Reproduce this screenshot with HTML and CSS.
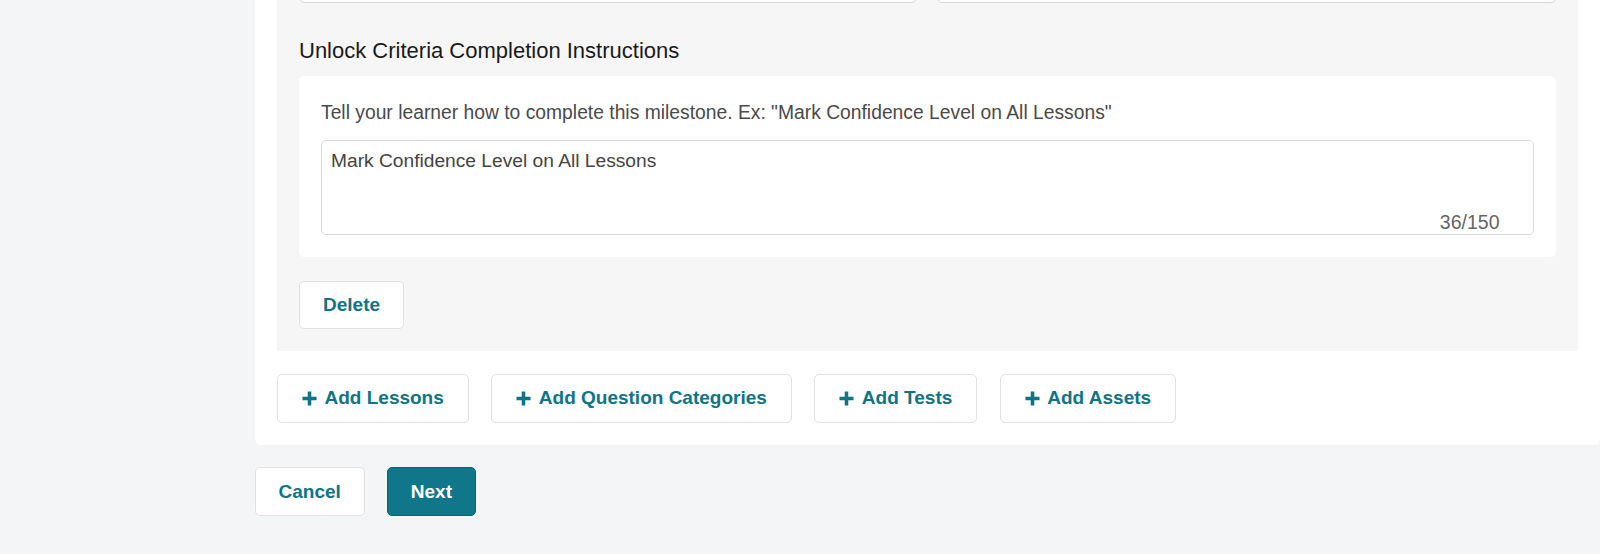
FILE: index.html
```html
<!DOCTYPE html>
<html lang="en">
<head>
  <meta charset="UTF-8">
  <meta name="viewport" content="width=device-width, initial-scale=1.0">
  <title>Edit Milestone</title>
  <link rel="stylesheet" href="styles.css">
</head>
<body>
  <main class="page">
    <section class="card">
      <div class="milestone">
        <div class="field-row">
          <input type="text" class="field" aria-label="Milestone name">
          <input type="text" class="field" aria-label="Milestone reward">
        </div>

        <label class="section-label" for="instructions">Unlock Criteria Completion Instructions</label>

        <div class="instructions">
          <p class="hint">Tell your learner how to complete this milestone. Ex: "Mark Confidence Level on All Lessons"</p>
          <div class="textarea-wrap">
            <textarea id="instructions" maxlength="150">Mark Confidence Level on All Lessons</textarea>
            <span class="counter">36/150</span>
          </div>
        </div>

        <button type="button" class="btn">Delete</button>
      </div>

      <div class="add-row">
        <button type="button" class="btn"><svg class="plus" viewBox="0 0 16 16"><path d="M8 0.5v15M0.5 8h15"/></svg>Add Lessons</button>
        <button type="button" class="btn"><svg class="plus" viewBox="0 0 16 16"><path d="M8 0.5v15M0.5 8h15"/></svg>Add Question Categories</button>
        <button type="button" class="btn"><svg class="plus" viewBox="0 0 16 16"><path d="M8 0.5v15M0.5 8h15"/></svg>Add Tests</button>
        <button type="button" class="btn"><svg class="plus" viewBox="0 0 16 16"><path d="M8 0.5v15M0.5 8h15"/></svg>Add Assets</button>
      </div>
    </section>

    <div class="actions">
      <button type="button" class="btn">Cancel</button>
      <button type="button" class="btn btn-primary">Next</button>
    </div>
  </main>
</body>
</html>
```

FILE: styles.css
```css
body {
  margin: 0;
  background-color: #f4f5f7;
  font-family: "Liberation Sans", Arial, sans-serif;
  color: #1a1a1a;
}
.page {
  margin-left: 254.5px;
}
.card {
  margin-top: -89.5px;
  padding: 22.5px;
  background-color: #fff;
  border-radius: 6px;
}
.milestone {
  padding: 22px 22px 21.5px;
  background-color: #f6f6f6;
}
.field-row {
  display: grid;
  grid-template-columns: 1fr 1fr;
  gap: 20px;
}
.field {
  box-sizing: border-box;
  height: 48px;
  border: 1px solid #d6d6d6;
  border-radius: 5px;
  background-color: #fff;
}
.section-label {
  display: block;
  margin: 35px 0 11.5px;
  font-size: 22px;
  line-height: 26px;
  color: #1a1a1a;
}
.instructions {
  padding: 25px 22px 22px;
  background-color: #fff;
  border-radius: 5px;
}
.hint {
  margin: 0 0 16px;
  font-size: 19.3px;
  line-height: 23px;
  color: #4a4a4a;
}
.textarea-wrap {
  position: relative;
}
textarea {
  display: block;
  box-sizing: border-box;
  width: 100%;
  height: 95.5px;
  padding: 8px 9px;
  border: 1px solid #d9d9d9;
  border-radius: 5px;
  font-family: inherit;
  font-size: 19.2px;
  line-height: 23px;
  color: #444;
  resize: none;
}
.counter {
  position: absolute;
  right: 34px;
  bottom: 1px;
  font-size: 19.5px;
  line-height: 23px;
  color: #666;
}
.btn {
  display: inline-flex;
  align-items: center;
  gap: 7.5px;
  box-sizing: border-box;
  height: 48px;
  padding: 0 23px;
  border: 1px solid #e2e2e2;
  border-radius: 5px;
  background-color: #fff;
  font-family: inherit;
  font-size: 19px;
  font-weight: bold;
  color: #0e7486;
  cursor: pointer;
}
.milestone .btn {
  margin-top: 24px;
}
.plus {
  width: 15px;
  height: 15px;
  fill: none;
  stroke: currentColor;
  stroke-width: 3.8;
}
.add-row {
  display: flex;
  gap: 22.5px;
  margin-top: 23px;
}
.add-row .btn {
  height: 49px;
  padding: 0 24px;
}
.actions {
  display: flex;
  gap: 22px;
  margin-top: 22px;
}
.actions .btn {
  height: 49px;
}
.btn-primary {
  background-color: #0f7789;
  border-color: #0b6272;
  color: #fff;
}
```
